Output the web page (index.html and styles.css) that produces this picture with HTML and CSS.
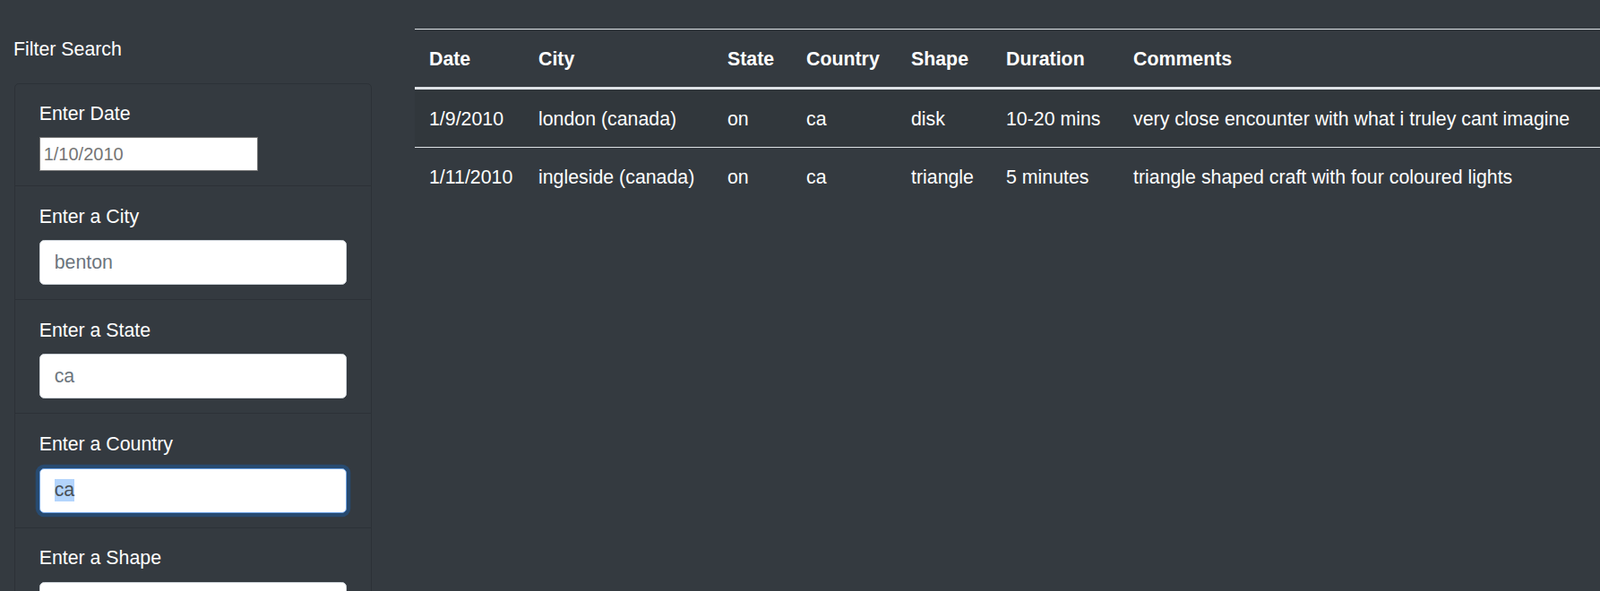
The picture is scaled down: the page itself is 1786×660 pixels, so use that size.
FILE: index.html
```html
<!DOCTYPE html>
<html lang="en">
<head>
<meta charset="utf-8">
<title>UFO Sightings</title>
<link rel="stylesheet" href="styles.css">
</head>
<body>
<div class="page">
  <aside class="sidebar">
    <h5 class="filter-title">Filter Search</h5>
    <form class="filters">
      <ul class="list-group">
        <li class="list-item list-item-first">
          <label for="datetime">Enter Date</label>
          <input class="date-input" id="datetime" type="text" placeholder="1/10/2010">
        </li>
        <li class="list-item">
          <label for="city">Enter a City</label>
          <input class="form-control" id="city" type="text" placeholder="benton">
        </li>
        <li class="list-item">
          <label for="state">Enter a State</label>
          <input class="form-control" id="state" type="text" placeholder="ca">
        </li>
        <li class="list-item">
          <label for="country">Enter a Country</label>
          <input class="form-control is-focused" id="country" type="text" value="ca">
        </li>
        <li class="list-item">
          <label for="shape">Enter a Shape</label>
          <input class="form-control" id="shape" type="text" placeholder="">
        </li>
      </ul>
    </form>
  </aside>
  <main class="content">
    <table class="ufo-table">
      <colgroup>
        <col class="c-date">
        <col class="c-city">
        <col class="c-state">
        <col class="c-country">
        <col class="c-shape">
        <col class="c-duration">
        <col class="c-comments">
      </colgroup>
      <thead>
        <tr>
          <th>Date</th>
          <th>City</th>
          <th>State</th>
          <th>Country</th>
          <th>Shape</th>
          <th>Duration</th>
          <th>Comments</th>
        </tr>
      </thead>
      <tbody>
        <tr>
          <td>1/9/2010</td>
          <td>london (canada)</td>
          <td>on</td>
          <td>ca</td>
          <td>disk</td>
          <td>10-20 mins</td>
          <td>very close encounter with what i truley cant imagine</td>
        </tr>
        <tr>
          <td>1/11/2010</td>
          <td>ingleside (canada)</td>
          <td>on</td>
          <td>ca</td>
          <td>triangle</td>
          <td>5 minutes</td>
          <td>triangle shaped craft with four coloured lights</td>
        </tr>
      </tbody>
    </table>
  </main>
</div>
<script src="script.js"></script>
</body>
</html>
```

FILE: styles.css
```css
html {
  overflow: hidden;
}

body {
  margin: 0;
  background: #343a40;
  color: #fff;
  font-family: "Liberation Sans", Arial, sans-serif;
  font-size: 21.33px;
  line-height: 32px;
}

.page {
  display: flex;
  align-items: flex-start;
}

.sidebar {
  flex: 0 0 399px;
  padding: 39px 0 0 16px;
}

.filter-title {
  margin: 0 0 22px -1px;
  font-size: 21.33px;
  font-weight: 400;
  line-height: 32px;
}

.filters {
  margin: 0;
}

.list-group {
  list-style: none;
  margin: 0;
  padding: 0;
  border-radius: 5px;
}

.list-item {
  padding: 17.5px 26.67px 16px;
  border: 1px solid rgba(0, 0, 0, 0.14);
  border-top-width: 0;
}

.list-item-first {
  padding-top: 16.5px;
  border-top-width: 1px;
  border-radius: 5px 5px 0 0;
}

.list-item label {
  display: block;
  margin-bottom: 10.67px;
}

.date-input {
  display: block;
  box-sizing: border-box;
  width: 244px;
  height: 38px;
  margin: 0;
  padding: 0 4px;
  border: 1px solid #767676;
  border-radius: 0;
  background: #fff;
  color: #000;
  font-family: "Liberation Sans", Arial, sans-serif;
  font-size: 20px;
  outline: none;
}

.date-input::placeholder {
  color: #757575;
}

.form-control {
  display: block;
  box-sizing: border-box;
  width: 100%;
  height: 50px;
  margin: 0;
  padding: 8px 16px;
  border: 1px solid #ced4da;
  border-radius: 5.33px;
  background: #fff;
  color: #495057;
  font-family: "Liberation Sans", Arial, sans-serif;
  font-size: 21.33px;
  line-height: 32px;
  outline: none;
}

.form-control::placeholder {
  color: #6c757d;
}

.form-control.is-focused {
  border-color: #6fa3e6;
  box-shadow: 0 0 0 4.27px rgba(0, 123, 255, 0.25);
}

.form-control::selection {
  background: #b3d4fc;
  color: #495057;
}

.content {
  flex: 1;
  min-width: 0;
  margin-left: 48px;
  padding-top: 32px;
}

.ufo-table {
  width: 100%;
  border-collapse: collapse;
  table-layout: fixed;
  color: #fff;
}

.c-date { width: 122px; }
.c-city { width: 211px; }
.c-state { width: 88px; }
.c-country { width: 117px; }
.c-shape { width: 106px; }
.c-duration { width: 142px; }

.ufo-table th,
.ufo-table td {
  padding: 17px 16px 15px;
  text-align: left;
  vertical-align: top;
  line-height: 32px;
  white-space: nowrap;
  border-top: 1px solid #dee2e6;
}

.ufo-table thead th {
  font-weight: 700;
  border-bottom: 3px solid #dee2e6;
}

.ufo-table tbody tr:nth-child(odd) {
  background: rgba(0, 0, 0, 0.05);
}
```

FILE: script.js
```js
var country = document.getElementById('country');
country.focus();
country.setSelectionRange(0, country.value.length);
```
